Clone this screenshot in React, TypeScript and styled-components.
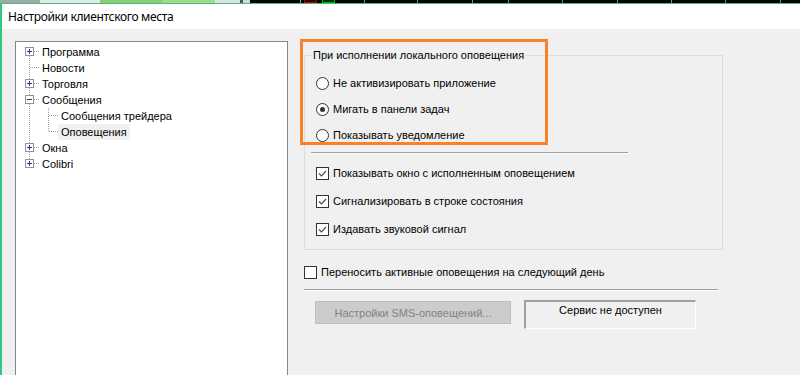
import React from "react";
import styled, { createGlobalStyle } from "styled-components";

const Global = createGlobalStyle`
  html, body { margin: 0; padding: 0; }
  body { width: 800px; height: 375px; overflow: hidden; background: #f0f0f0; font-family: "Liberation Sans", Arial, sans-serif; }
`;

const Page = styled.div`
  width: 800px;
  height: 375px;
  display: flex;
  flex-direction: column;
  overflow: hidden;
`;

const Strip = styled.div`
  height: 3px;
  display: flex;
  flex: none;
  background: #000;
`;

const Seg = styled.div<{ $w: number; $c: string; $b?: string }>`
  width: ${(p) => p.$w}px;
  flex: none;
  background: ${(p) => p.$c};
  box-sizing: border-box;
  ${(p) => (p.$b ? `border: 1px solid ${p.$b}; border-top: none;` : "")}
`;

const Window = styled.div`
  flex: 1;
  display: flex;
  flex-direction: column;
  border-top: 1px solid #38c47e;
  border-left: 2px solid #38c47e;
  min-height: 0;
`;

const TitleBar = styled.div`
  height: 25px;
  flex: none;
  background: #fff;
  display: flex;
  align-items: center;
  padding-left: 6px;
  font-family: "Noto Sans", "Open Sans", sans-serif;
  font-size: 12px;
  letter-spacing: -0.35px;
  color: #000;
`;

const Content = styled.div`
  position: relative;
  flex: 1;
  display: grid;
  grid-template-columns: 273px 1fr;
  column-gap: 16px;
  padding: 12px 0 0 13px;
  font-size: 11px;
  color: #000;
`;

const Highlight = styled.div`
  position: absolute;
  left: 298px;
  top: 10px;
  width: 248px;
  height: 106px;
  box-sizing: border-box;
  border: 3px solid #f6822b;
  pointer-events: none;
`;

const Tree = styled.div`
  background: #fff;
  border: 1px solid #828790;
  height: 360px;
  padding-top: 2px;
  box-sizing: border-box;
`;

const TreeRow = styled.div`
  height: 16px;
  display: flex;
  align-items: stretch;
  padding-left: 8px;
`;

const Gutter = styled.svg`
  flex: none;
  display: block;
`;

const TreeLabel = styled.span<{ $sel?: boolean }>`
  display: flex;
  align-items: center;
  padding: 0 3px;
  background: ${(p) => (p.$sel ? "#f0f0f0" : "transparent")};
  white-space: nowrap;
`;

const Right = styled.div`
  display: flex;
  flex-direction: column;
  width: 419px;
`;

const Group = styled.fieldset`
  margin: 7px 0 0 0;
  padding: 8px 0 6px 0;
  border: 1px solid #dcdcdc;
  min-width: 0;
`;

const Legend = styled.legend`
  margin-left: 6px;
  padding: 0 2px;
  line-height: 14px;
`;

const GroupBody = styled.div`
  display: flex;
  flex-direction: column;
  padding-left: 11px;
`;

const OptionRow = styled.label<{ $h: number }>`
  height: ${(p) => p.$h}px;
  display: flex;
  align-items: center;
  gap: 4px;
  white-space: nowrap;
`;

const LooseRow = styled(OptionRow)`
  margin-top: 12px;
`;

const RadioBox = styled.span<{ $on?: boolean }>`
  width: 13px;
  height: 13px;
  box-sizing: border-box;
  border: 1px solid #333;
  border-radius: 50%;
  background: #fff;
  display: flex;
  align-items: center;
  justify-content: center;
  flex: none;
  &::after {
    content: "";
    width: 5px;
    height: 5px;
    border-radius: 50%;
    background: ${(p) => (p.$on ? "#333" : "transparent")};
  }
`;

const CheckBox = styled.span`
  width: 13px;
  height: 13px;
  box-sizing: border-box;
  border: 1px solid #333;
  background: #fff;
  flex: none;
  display: flex;
`;

const Separator = styled.div<{ $w: number; $ml: number; $mt: number; $mb?: number }>`
  width: ${(p) => p.$w}px;
  margin: ${(p) => p.$mt}px 0 ${(p) => p.$mb ?? 0}px ${(p) => p.$ml}px;
  border-top: 1px solid #a0a0a0;
  border-bottom: 1px solid #fff;
`;

const BottomRow = styled.div`
  display: flex;
  align-items: flex-start;
  gap: 13px;
  margin: 9px 0 0 11px;
`;

const DisabledButton = styled.div`
  width: 196px;
  height: 23px;
  box-sizing: border-box;
  background: #cccccc;
  border: 1px solid #bfbfbf;
  color: #838383;
  display: flex;
  align-items: center;
  justify-content: center;
  margin-top: 1px;
`;

const StatusBox = styled.div`
  width: 172px;
  height: 29px;
  box-sizing: border-box;
  border-top: 2px solid #a0a0a0;
  border-left: 2px solid #a0a0a0;
  border-right: 1px solid #fff;
  border-bottom: 1px solid #fff;
  display: flex;
  justify-content: center;
  padding-top: 2px;
`;

const Expander = ({ open }: { open: boolean }) => (
  <g>
    <rect x={1.5} y={3.5} width={8} height={8} fill="#fff" stroke="#919191" />
    <line x1={3} y1={7.5} x2={8} y2={7.5} stroke="#1c3f94" />
    {!open && <line x1={5.5} y1={5} x2={5.5} y2={10} stroke="#1c3f94" />}
  </g>
);

type Node = { label: string; level: 0 | 1; box?: "plus" | "minus"; first?: boolean; last?: boolean; lastChild?: boolean; sel?: boolean };

const nodes: Node[] = [
  { label: "Программа", level: 0, box: "plus", first: true },
  { label: "Новости", level: 0 },
  { label: "Торговля", level: 0, box: "plus" },
  { label: "Сообщения", level: 0, box: "minus" },
  { label: "Сообщения трейдера", level: 1 },
  { label: "Оповещения", level: 1, lastChild: true, sel: true },
  { label: "Окна", level: 0, box: "plus" },
  { label: "Colibri", level: 0, box: "plus", last: true },
];

const dot = { stroke: "#a0a0a0", strokeDasharray: "1 1" };

const TreeNode = ({ n }: { n: Node }) => {
  const w = n.level === 0 ? 15 : 34;
  return (
    <TreeRow>
      <Gutter width={w} height={16}>
        <line x1={5.5} y1={n.first ? 8 : 0} x2={5.5} y2={n.last ? 8 : 16} {...dot} />
        {n.level === 0 && <line x1={6} y1={7.5} x2={15} y2={7.5} {...dot} />}
        {n.level === 1 && (
          <>
            <line x1={24.5} y1={0} x2={24.5} y2={n.lastChild ? 8 : 16} {...dot} />
            <line x1={25} y1={7.5} x2={34} y2={7.5} {...dot} />
          </>
        )}
        {n.box && <Expander open={n.box === "minus"} />}
      </Gutter>
      <TreeLabel $sel={n.sel}>{n.label}</TreeLabel>
    </TreeRow>
  );
};

const Check = () => (
  <CheckBox>
    <svg width={11} height={11}>
      <polyline points="2,5.5 4.5,8 9,3" fill="none" stroke="#4a4a4a" strokeWidth={1.2} />
    </svg>
  </CheckBox>
);

const ticks = [18, 55, 36, 54, 55, 54, 54, 55];

export default function App() {
  return (
    <Page>
      <Global />
      <Strip>
        <Seg $w={40} $c="#a6a6a6" />
        <Seg $w={60} $c="#e6e6e6" />
        <Seg $w={62} $c="#8fcb72" />
        <Seg $w={53} $c="#a3d98a" />
        <Seg $w={25} $c="#e2e2e2" />
        <Seg $w={3} $c="#555" />
        <Seg $w={7} $c="#d8d8d8" />
        <Seg $w={50} $c="#000" />
        <Seg $w={1} $c="#999" />
        <Seg $w={3} $c="#000" />
        <Seg $w={13} $c="#300" $b="#c00000" />
        <Seg $w={5} $c="#000" />
        <Seg $w={13} $c="#030" $b="#00b000" />
        <Seg $w={29} $c="#000" />
        <Seg $w={1} $c="#888" />
        <Seg $w={35} $c="#000" />
        {ticks.map((t, i) => (
          <React.Fragment key={i}>
            <Seg $w={t - 1} $c="#000" />
            <Seg $w={1} $c="#888" />
          </React.Fragment>
        ))}
      </Strip>
      <Window>
        <TitleBar>Настройки клиентского места</TitleBar>
        <Content>
          <Tree>
            {nodes.map((n) => (
              <TreeNode key={n.label} n={n} />
            ))}
          </Tree>
          <Right>
            <Group>
              <Legend>При исполнении локального оповещения</Legend>
              <GroupBody>
                <OptionRow $h={26}><RadioBox />Не активизировать приложение</OptionRow>
                <OptionRow $h={26}><RadioBox $on />Мигать в панели задач</OptionRow>
                <OptionRow $h={26}><RadioBox />Показывать уведомление</OptionRow>
                <Separator $w={317} $ml={-5} $mt={4} $mb={5} />
                <OptionRow $h={28}><Check />Показывать окно с исполненным оповещением</OptionRow>
                <OptionRow $h={28}><Check />Сигнализировать в строке состояния</OptionRow>
                <OptionRow $h={28}><Check />Издавать звуковой сигнал</OptionRow>
              </GroupBody>
            </Group>
            <LooseRow $h={20}>
              <CheckBox />Переносить активные оповещения на следующий день
            </LooseRow>
            <Separator $w={414} $ml={0} $mt={7} />
            <BottomRow>
              <DisabledButton>Настройки SMS-оповещений...</DisabledButton>
              <StatusBox>Сервис не доступен</StatusBox>
            </BottomRow>
          </Right>
          <Highlight />
        </Content>
      </Window>
    </Page>
  );
}
